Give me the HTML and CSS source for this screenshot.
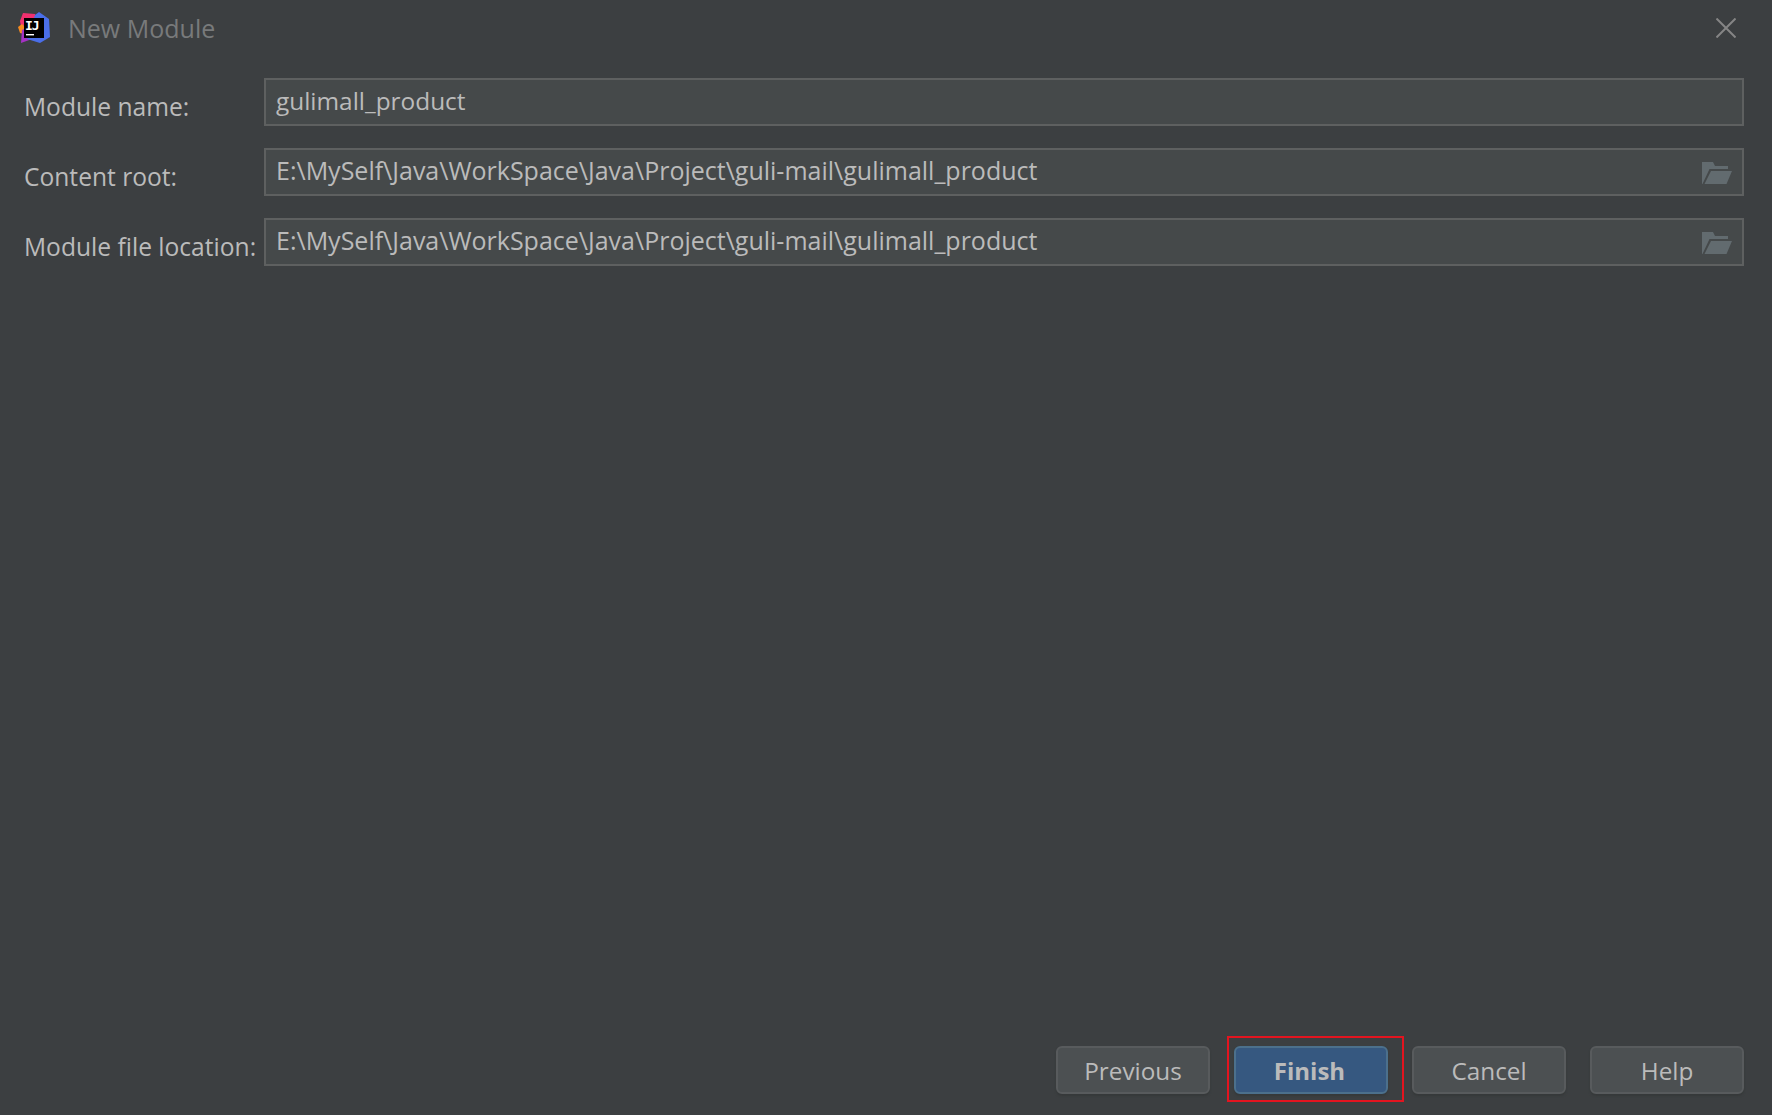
FILE: index.html
```html
<!DOCTYPE html>
<html lang="en">
<head>
    <meta charset="UTF-8">
    <meta name="viewport" content="width=device-width, initial-scale=1.0">
    <title>New Module</title>
    <link rel="stylesheet" href="styles.css">
</head>
<body>
    <div class="dialog">
        <header class="title-bar">
            <svg class="app-logo" viewBox="0 0 32 32" width="32" height="32">
                <polygon points="5,1 17,2 21,10 10,24 3,15 2,9" fill="#f0306f"/>
                <polygon points="0,15 4,12 7,15 6,22 2,21" fill="#f58a1f"/>
                <polygon points="4,18 12,14 14,27 3,31" fill="#a532c4"/>
                <polygon points="17,3 21,0 31,7 32,25 22,31 9,27" fill="#4a6ee8"/>
                <rect x="6" y="6" width="20" height="20" fill="#000"/>
                <text class="logo-text" x="7" y="17.5">IJ</text>
                <rect x="8" y="22" width="8" height="1.4" fill="#fff"/>
            </svg>
            <span class="title-text">New Module</span>
            <svg class="close-icon" viewBox="0 0 20 20" width="20" height="20">
                <path d="M0.5 0.5 L19.5 19.5 M19.5 0.5 L0.5 19.5" stroke="#858585" stroke-width="2" fill="none"/>
            </svg>
        </header>

        <main class="form">
            <label class="field-label">Module name:</label>
            <div class="field"><span class="field-value field-value-name">gulimall_product</span></div>

            <label class="field-label">Content root:</label>
            <div class="field">
                <span class="field-value">E:\MySelf\Java\WorkSpace\Java\Project\guli-mail\gulimall_product</span>
                <svg class="folder-icon" viewBox="0 0 30 22" width="30" height="22">
                    <path d="M0 22 V0 H11 L13 4 H26 V7 H7.5 L0.5 22 Z" fill="#626b6f"/>
                    <path d="M9 9 H30 L24.5 22 H2.5 Z" fill="#626b6f"/>
                </svg>
            </div>

            <label class="field-label">Module file location:</label>
            <div class="field">
                <span class="field-value">E:\MySelf\Java\WorkSpace\Java\Project\guli-mail\gulimall_product</span>
                <svg class="folder-icon" viewBox="0 0 30 22" width="30" height="22">
                    <path d="M0 22 V0 H11 L13 4 H26 V7 H7.5 L0.5 22 Z" fill="#626b6f"/>
                    <path d="M9 9 H30 L24.5 22 H2.5 Z" fill="#626b6f"/>
                </svg>
            </div>
        </main>

        <footer class="actions">
            <button class="btn">Previous</button>
            <span class="highlight"><button class="btn btn-primary">Finish</button></span>
            <button class="btn">Cancel</button>
            <button class="btn">Help</button>
        </footer>
    </div>
</body>
</html>
```

FILE: styles.css
```css
* {
    box-sizing: border-box;
    margin: 0;
    padding: 0;
}

html, body {
    height: 100%;
}

body {
    font-family: "Open Sans", "Noto Sans", sans-serif;
    font-size: 25px;
    color: #bbbbbb;
    background-color: #3c3f41;
}

.dialog {
    height: 100%;
    display: flex;
    flex-direction: column;
    padding: 0 28px 13px 18px;
}

.title-bar {
    display: flex;
    align-items: center;
    height: 78px;
    padding-bottom: 22px;
}

.app-logo {
    flex: none;
}

.logo-text {
    font-family: "DejaVu Sans Mono", monospace;
    font-size: 13px;
    font-weight: bold;
    letter-spacing: -1px;
    fill: #fff;
}

.title-text {
    margin-left: 18px;
    color: #787a7b;
}

.close-icon {
    margin-left: auto;
    margin-right: 8px;
}

.form {
    flex: 1;
    display: grid;
    grid-template-columns: 246px 1fr;
    grid-auto-rows: 48px;
    row-gap: 22px;
    align-content: start;
}

.field-label {
    padding: 12px 0 0 6px;
    font-size: 24.6px;
    white-space: nowrap;
}

.field {
    display: flex;
    align-items: center;
    padding: 0 11px 4px 10px;
    border: 2px solid #5e6060;
    background-color: #45494a;
}

.field-value {
    flex: 1;
}

.field-value-name {
    font-size: 24.4px;
}

.folder-icon {
    margin-top: 5px;
    margin-right: -1px;
}

.actions {
    display: flex;
    align-items: center;
    justify-content: flex-end;
    gap: 24px;
}

.actions > .btn {
    margin-top: 2px;
}

.highlight {
    display: block;
    margin: 0 -16px 0 -7px;
    padding: 8px 14px 6px 5px;
    border: 2px solid #e3141f;
}

.btn {
    display: block;
    width: 154px;
    height: 48px;
    font: inherit;
    font-size: 24.3px;
    color: #bbbbbb;
    background-color: #4c5052;
    border: 2px solid #585b5d;
    border-radius: 6px;
    box-shadow: 0 2px 2px #36393a;
}

.btn-primary {
    padding-right: 3px;
    font-size: 24px;
    font-weight: bold;
    background-color: #365880;
    border-color: #4c708c;
}
```
